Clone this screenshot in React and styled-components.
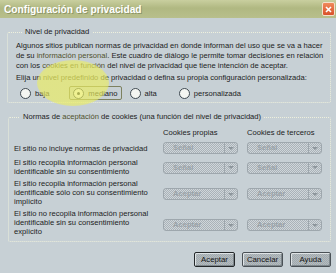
import { Fragment } from "react";
import styled, { createGlobalStyle } from "styled-components";

const GlobalStyle = createGlobalStyle`
  body {
    margin: 0;
    background: #c7d0d5;
    font-family: "Liberation Sans", Arial, sans-serif;
  }
`;

const Window = styled.div`
  position: relative;
  width: 336px;
  height: 273px;
  overflow: hidden;
  background: #c7d0d5;
  color: #1c1c1c;
  font-size: 7.6px;
`;

const TitleBar = styled.div`
  height: 18px;
  display: flex;
  align-items: center;
  justify-content: space-between;
  padding: 0 1px 0 4px;
  background: linear-gradient(#c9cf9f, #b0b882 45%, #b8bf8c);
`;

const Title = styled.span`
  color: #fff;
  font-weight: bold;
  font-size: 10.2px;
  text-shadow: 1px 1px 0 #8d9566;
`;

const CloseButton = styled.div`
  width: 13px;
  height: 14px;
  display: flex;
  align-items: center;
  justify-content: center;
  border: 1px solid #f4e0cc;
  border-radius: 2px;
  background: linear-gradient(#f08a5c, #d9512a);
  box-sizing: border-box;
`;

const Body = styled.div`
  padding: 9px 5px 0 7px;
`;

const Group = styled.fieldset`
  margin: ${(p) => p.$top || 0}px 0 0 ${(p) => p.$left || 0}px;
  padding: ${(p) => p.$pad};
  border: 1px dotted #eef0dc;
  border-radius: 2px;
  min-width: 0;
`;

const Legend = styled.legend`
  padding: 0 3px;
  margin-left: 6px;
  line-height: 10px;
`;

const Para = styled.p`
  margin: ${(p) => p.$top || 0}px 0 0;
  line-height: 10px;
  white-space: nowrap;
`;

const Hint = styled.span`
  color: ${(p) => (p.$tint ? "#50502c" : "inherit")};
`;

const RadioRow = styled.div`
  display: flex;
  align-items: center;
  margin-top: 3px;
  height: 14px;
`;

const RadioItem = styled.label`
  display: flex;
  align-items: center;
  gap: 4px;
  height: 14px;
  box-sizing: border-box;
  padding: 0 3px;
  margin-right: ${(p) => p.$gap}px;
  border: 1px solid ${(p) => (p.$focus ? "#7d8160" : "transparent")};
  border-radius: 2px;
`;

const RadioDot = styled.span`
  width: 9px;
  height: 9px;
  border-radius: 50%;
  border: 1px solid #3f4a52;
  background: #f4f6f2;
  display: flex;
  align-items: center;
  justify-content: center;
  &::after {
    content: "";
    display: ${(p) => (p.$on ? "block" : "none")};
    width: 3px;
    height: 3px;
    border-radius: 50%;
    background: #2a3036;
  }
`;

const CookieGrid = styled.div`
  display: grid;
  grid-template-columns: 140px 75px 75px;
  column-gap: 9px;
  row-gap: 3px;
  align-items: center;
`;

const ColHead = styled.div`
  line-height: 10px;
  white-space: nowrap;
`;

const RowLabel = styled.div`
  white-space: nowrap;
  min-height: 14px;
  display: flex;
  flex-direction: column;
  justify-content: center;
`;

const LabelLine = styled.span`
  display: block;
  height: 9px;
  line-height: 9px;
`;

const Combo = styled.div`
  height: 12px;
  box-sizing: border-box;
  display: flex;
  border: 1px solid #9ea7ad;
  border-radius: 3px;
  background: repeating-conic-gradient(#cfd6da 0 25%, #aab2b8 0 50%) 0 0 / 2px 2px;
  margin-top: ${(p) => p.$shift || 0}px;
`;

const ComboText = styled.span`
  flex: 1;
  padding-left: 9px;
  line-height: 10px;
  font-weight: bold;
  color: #9aa2a8;
`;

const ComboArrow = styled.span`
  width: 12px;
  border-left: 1px solid #9ea7ad;
  display: flex;
  align-items: center;
  justify-content: center;
  &::after {
    content: "";
    border-left: 3px solid transparent;
    border-right: 3px solid transparent;
    border-top: 3px solid #8d969c;
  }
`;

const Buttons = styled.div`
  display: flex;
  justify-content: flex-end;
  gap: 7px;
  margin-top: 10px;
`;

const Button = styled.button`
  width: 41px;
  height: 15px;
  padding: 0;
  font-family: inherit;
  font-size: 7.8px;
  color: #141414;
  border: 1px solid ${(p) => (p.$primary ? "#24282a" : "#4a5156")};
  border-radius: 2px;
  background: repeating-conic-gradient(#b3bbbf 0 25%, #a2aaae 0 50%) 0 0 / 2px 2px;
  box-shadow: inset 1px 1px 0 #dfe4e6, inset -1px -1px 0 #7e878c;
`;

const Highlight = styled.div`
  position: absolute;
  left: 37px;
  top: 60px;
  width: 72px;
  height: 46px;
  border-radius: 50%;
  background: radial-gradient(ellipse at center, rgba(236, 238, 96, 0.66) 0 64%, rgba(236, 238, 96, 0.38) 82%, rgba(236, 238, 96, 0) 100%);
  pointer-events: none;
`;

const rows = [
  { lines: ["El sitio no incluye normas de privacidad"], value: "Señal" },
  {
    lines: ["El sitio recopila información personal", "identificable sin su consentimiento"],
    value: "Señal",
    shift: 1,
  },
  {
    lines: [
      "El sitio recopila información personal",
      "identificable sólo con su consentimiento",
      "implícito",
    ],
    value: "Aceptar",
    shift: 3,
  },
  {
    lines: [
      "El sitio no recopila información personal",
      "identificable sin su consentimiento",
      "explícito",
    ],
    value: "Aceptar",
    shift: 5,
  },
];

const levels = [
  { name: "baja", gap: 16 },
  { name: "mediano", gap: 4, on: true },
  { name: "alta", gap: 14 },
  { name: "personalizada", gap: 0 },
];

const App = () => {
  return (
    <Window>
      <GlobalStyle />
      <TitleBar>
        <Title>Configuración de privacidad</Title>
        <CloseButton>
          <svg width="7" height="7" viewBox="0 0 7 7">
            <path d="M1 1 L6 6 M6 1 L1 6" stroke="#fff" strokeWidth="1.6" />
          </svg>
        </CloseButton>
      </TitleBar>
      <Body>
        <Group $pad="4px 6px 2px 8px">
          <Legend>Nivel de privacidad</Legend>
          <Para>Algunos sitios publican normas de privacidad en donde informan del uso que se va a hacer</Para>
          <Para>
            de su <Hint $tint>información personal</Hint>. Este cuadro de diálogo le permite tomar decisiones en relación
          </Para>
          <Para>
            con los <Hint $tint>cookies en función</Hint> del nivel de privacidad que tiene intención de aceptar.
          </Para>
          <Para $top={2}>
            Elija un <Hint $tint>nivel predefinido</Hint> de privacidad o defina su propia configuración personalizada:
          </Para>
          <RadioRow>
            {levels.map((l) => (
              <RadioItem key={l.name} $gap={l.gap} $focus={l.on}>
                <RadioDot $on={l.on} />
                {l.name}
              </RadioItem>
            ))}
          </RadioRow>
        </Group>
        <Group $top={9} $left={1} $pad="6px 7px 5px 5px">
          <Legend>
            Normas de <Hint $tint>aceptación</Hint> de cookies (una función del nivel de privacidad)
          </Legend>
          <CookieGrid>
            <span />
            <ColHead>Cookies propias</ColHead>
            <ColHead>Cookies de terceros</ColHead>
            {rows.map((r, i) => (
              <Fragment key={i}>
                <RowLabel>
                  {r.lines.map((t) => (
                    <LabelLine key={t}>{t}</LabelLine>
                  ))}
                </RowLabel>
                {[0, 1].map((c) => (
                  <Combo key={c} $shift={r.shift}>
                    <ComboText>{r.value}</ComboText>
                    <ComboArrow />
                  </Combo>
                ))}
              </Fragment>
            ))}
          </CookieGrid>
        </Group>
        <Buttons>
          <Button $primary>Aceptar</Button>
          <Button>Cancelar</Button>
          <Button>Ayuda</Button>
        </Buttons>
      </Body>
      <Highlight />
    </Window>
  );
};

export default App;
